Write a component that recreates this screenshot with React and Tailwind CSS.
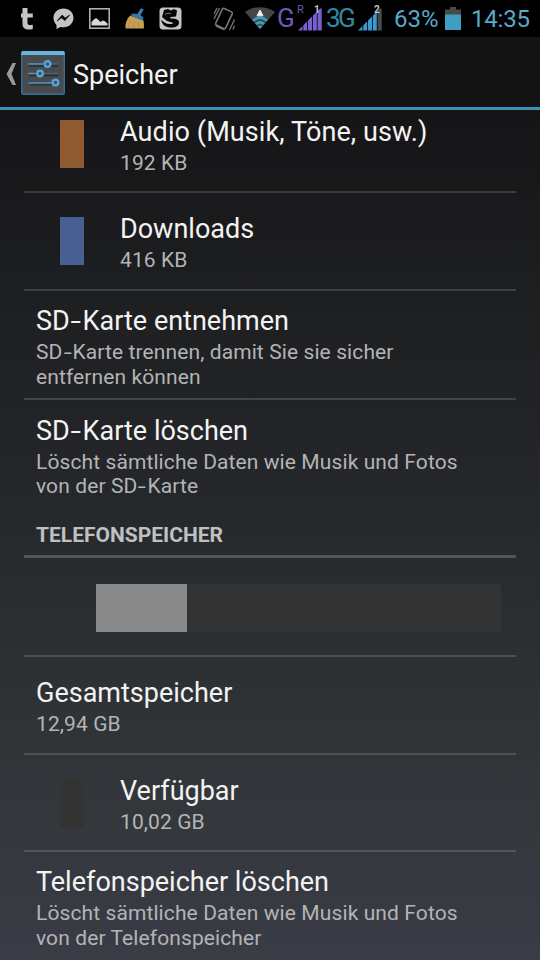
import React from 'react';

function TumblrIcon() {
  return (
    <svg width="12" height="22" viewBox="0 0 12 22" fill="#c4c4c4">
      <path d="M1.500 0H6.500v5.500h5.300V9.500H6.500V15c0 2 2 2.500 5.300 1.700V21C6 22.500 1.500 21 1.500 16V9.500H0V5.500h1.500z" />
    </svg>
  );
}

function MessengerIcon() {
  return (
    <svg width="21" height="22" viewBox="0 0 21 22">
      <path d="M10.500 .5C4.800 .5 .5 4.500 .5 9.800c0 3 1.300 5.500 3 7.200v4l4-2c1 .2 2 .3 3 .3 5.700 0 10-4.200 10-9.500S16.200 .5 10.500 .5z" fill="#c4c4c4" />
      <path d="M4 13l5.200-6 3 3 4.500-3-5 5.800-3-3z" fill="#000" stroke="#000" strokeWidth=".6" />
    </svg>
  );
}

function PictureIcon() {
  return (
    <svg width="21" height="21" viewBox="0 0 21 21">
      <rect x=".8" y=".8" width="19.400" height="19.400" fill="none" stroke="#b9b9b9" strokeWidth="1.500" />
      <path d="M2.500 17.500v-3.500L5.500 11q1.500-1.500 3 0l3 3 2-1.500 2 .5 3 2.500v2z" fill="#d8d8d8" />
    </svg>
  );
}

function BroomIcon() {
  return (
    <svg width="20" height="21" viewBox="0 0 20 21">
      <path d="M5 7.500l13.500 5c.5 3 .5 5.500 .3 8H.5C0 16 1.500 11 5 7.500z" fill="#c69f55" />
      <path d="M5.500 12l-2 8M9.500 13l-1 7M13.500 14v6" stroke="#a9823f" strokeWidth=".7" />
      <path d="M15.800 .3l3 1-3.300 6 2.700 2v3.500L6.500 8V5.500l5.800 .5z" fill="#3179ae" />
    </svg>
  );
}

function SpeedIcon() {
  return (
    <svg width="23" height="23" viewBox="0 0 23 23">
      <rect x=".5" y=".5" width="22" height="22" rx="3.500" fill="#c4c4c4" />
      <path d="M3 10L5 3l4-1 3 1.500L15 2l3 1.500-1 6-5 .5q-2 1 0 1.500c5 0 8 1 8 4 0 4-5 5.500-9 5-4-.3-7-2-8-5l-1-3c3 3.500 7 5.500 12 4 1-1.500-6-1.500-8-4z" fill="#050505" />
      <path d="M6 7.500c2-1.500 4-1.500 6-.8" stroke="#999" strokeWidth=".8" fill="none" />
    </svg>
  );
}

function VibrateIcon() {
  return (
    <svg width="22" height="26" viewBox="0 0 22 26" fill="none" stroke="#777">
      <rect x="5.500" y="3.300" width="11" height="18.500" rx="1.500" strokeWidth="1.600" transform="rotate(25 11 12.500)" />
      <path d="M3 19.500l8 3.700" strokeWidth="2.200" />
      <path d="M1 13l5.500-11M1 8l3-6M16.500 24l5-10.500M20 23.500l1.500-4" strokeWidth="1.300" />
    </svg>
  );
}

function WifiIcon() {
  return (
    <svg width="30" height="23" viewBox="0 0 30 23">
      <path d="M0 5C8-1.500 22-1.500 30 5L15 22z" fill="#454545" />
      <path d="M8 13.800c4-4.200 10-4.200 14 0M11 17.300c2.500-2.400 5.500-2.400 8 0" fill="none" stroke="#3c9dbf" strokeWidth="2.600" />
      <path d="M12.500 19.300q2.500-1.500 5 0L15 22z" fill="#3c9dbf" />
      <path d="M15 3l3 5.800h-6z" fill="#eee" stroke="#eee" />
    </svg>
  );
}

function SignalIcon({ color, last }) {
  return (
    <svg width="24" height="24" viewBox="0 0 24 24" fill={color}>
      <path d="M0 23.500L4.500 19v4.500zM5.300 18.200l3.900-3.900v9.200H5.300zM10 13.500l4-4v14h-4zM14.800 8.700l4-4v18.800h-4z" />
      <path d="M19.600 3.900L22 1.500h1.700v22h-4.100z" fill={last} />
    </svg>
  );
}

function Signal({ sim, color, last }) {
  return (
    <div className="relative h-6 w-6">
      <SignalIcon color={color} last={last} />
      <span className="absolute -top-[2px] left-[16px] text-[10px] leading-[10px] font-bold text-[#c4c4c4]">{sim}</span>
    </div>
  );
}

function BatteryIcon() {
  return (
    <svg width="16" height="23" viewBox="0 0 16 23">
      <path d="M5 0h6v2.500h5V8H0V2.500h5z" fill="#494949" />
      <path d="M0 7.500h16V23H0z" fill="#3d9fc3" />
    </svg>
  );
}

function SettingsIcon() {
  return (
    <svg width="44" height="44" viewBox="0 0 44 44">
      <rect x=".7" y=".7" width="42.600" height="42.600" rx="1.500" fill="#484a4d" stroke="#376f96" strokeWidth="1.400" />
      <path d="M1 0h42l1 4H0z" fill="#65b5dc" />
      <path d="M8 14.500h29M8 24h29M8 33h28" stroke="#303336" strokeWidth="3" />
      <path d="M7.500 13h15M7.500 22.500h7M7.500 32h24" stroke="#4d9bce" strokeWidth="1.600" />
      <path d="M30 13h7M22 22.500h15" stroke="#3f6b8a" strokeWidth="1.300" />
      <g fill="#44535f" stroke="#57a5d6" strokeWidth="2.200">
        <circle cx="26.500" cy="13" r="2.900" />
        <circle cx="19" cy="22.500" r="2.900" />
        <circle cx="34.500" cy="31.500" r="2.900" />
      </g>
    </svg>
  );
}

function StatusBar() {
  return (
    <div className="flex h-[37px] shrink-0 items-center bg-black">
      <div className="ml-[21px] w-3"><TumblrIcon /></div>
      <div className="ml-[20px] w-[21px]"><MessengerIcon /></div>
      <div className="ml-[15px] w-[21px]"><PictureIcon /></div>
      <div className="ml-[15px] w-5"><BroomIcon /></div>
      <div className="ml-[14px] w-[23px]"><SpeedIcon /></div>
      <div className="ml-[31px] w-[22px]"><VibrateIcon /></div>
      <div className="ml-[10px] w-[30px]"><WifiIcon /></div>
      <span className="ml-[2px] w-[20px] text-[26px] leading-[37px] text-[#7057bd]">G</span>
      <span className="-mr-[2px] w-[3px] pb-[18px] text-[11px] leading-[12px] text-[#7057bd]">R</span>
      <Signal sim="1" color="#7a5fd0" last="#7a5fd0" />
      <span className="ml-[4px] w-[32px] text-[26px] leading-[37px] tracking-[-2.5px] text-[#3587a3]">3G</span>
      <Signal sim="2" color="#3b99d0" last="#4b4b4b" />
      <span className="ml-[12px] w-[51px] pt-[2px] text-[24px] leading-[37px] text-[#58a9ca]">63%</span>
      <BatteryIcon />
      <span className="ml-[10px] pt-[2px] text-[24px] leading-[37px] tracking-[-0.2px] text-[#58a9ca]">14:35</span>
    </div>
  );
}

function ActionBar() {
  return (
    <div className="flex h-[73px] shrink-0 items-center border-b-[3px] border-[#3c93b5] bg-[#131313] pl-[6px]">
      <svg className="mt-[3px]" width="11" height="22" viewBox="0 0 11 22" fill="#9a9a9a">
        <path d="M6.500 0H10L5.500 11 10 22H6.500L.5 11z" />
      </svg>
      <div className="ml-[4px] mt-[2px]"><SettingsIcon /></div>
      <h1 className="ml-[8px] mt-[5px] text-[27px] leading-[32px] text-[#f3f3f3]">Speicher</h1>
    </div>
  );
}

function Row({ title, lines, swatch, className }) {
  return (
    <div className={`mx-6 flex shrink-0 items-center ${className}`}>
      {swatch && <div className={`mx-9 h-12 w-6 shrink-0 ${swatch}`} />}
      <div className={swatch ? 'pt-px' : 'pl-3'}>
        <div className="pt-px pb-px text-[27px] leading-[36px] text-[#f3f3f3]">{title}</div>
        {lines.map((line, i) => (
          <div key={i} className="text-[21px] leading-[24.5px] tracking-[0.1px] text-[#b4b4b6]">{line}</div>
        ))}
      </div>
    </div>
  );
}

// "SD-Karte" is set with a wide hyphen
function Sd({ children }) {
  return (
    <>SD<span className="mx-[0.1em] inline-block scale-x-140">-</span>{children}</>
  );
}

export default function App() {
  return (
    <div className="flex h-[960px] w-[540px] flex-col overflow-hidden whitespace-nowrap bg-[linear-gradient(#121213_0px,#151517_110px,#1e1f21_300px,#222427_430px,#282b2e_560px,#2e3134_680px,#33363a_800px,#3a3c46_960px)] font-[Roboto,sans-serif]">
      <StatusBar />
      <ActionBar />
      <div className="flex flex-1 flex-col overflow-hidden">
        <Row className="-mt-[15px] h-[98px] border-b-2 border-white/15 pt-[2px]" swatch="bg-[#905a30]" title={<span className="tracking-[0.1px]">Audio (Musik, Töne, usw.)</span>} lines={['192 KB']} />
        <Row className="h-[98px] border-b-2 border-white/15" swatch="bg-[#485f94]" title="Downloads" lines={['416 KB']} />
        <Row
          className="h-[109px] border-b-2 border-white/15 pt-[2px]"
          title={<Sd>Karte entnehmen</Sd>}
          lines={[<Sd>Karte trennen, damit Sie sie sicher</Sd>, 'entfernen können']}
        />
        <Row
          className="h-[110px]"
          title={<Sd>Karte löschen</Sd>}
          lines={['Löscht sämtliche Daten wie Musik und Fotos', <>von der <Sd>Karte</Sd></>]}
        />
        <h2 className="mx-6 h-[48px] shrink-0 border-b-[3px] border-[#525659] pl-3 text-[21px] font-bold leading-[50px] text-[#bfc0c1]">TELEFONSPEICHER</h2>
        <div className="mx-6 flex h-[99px] shrink-0 items-center border-b-2 border-white/15 pl-[72px] pt-[2px]">
          <div className="flex h-12 w-[405px] bg-[#333333]">
            <div className="w-[91px] bg-[#8a8a8a]" />
          </div>
        </div>
        <Row className="h-[98px] border-b-2 border-white/15 pt-px" title="Gesamtspeicher" lines={['12,94 GB']} />
        <Row className="h-[97px] border-b-2 border-white/15" swatch="bg-[#333333]" title="Verfügbar" lines={['10,02 GB']} />
        <Row className="h-[109px]" title="Telefonspeicher löschen" lines={['Löscht sämtliche Daten wie Musik und Fotos', 'von der Telefonspeicher']} />
      </div>
    </div>
  );
}
